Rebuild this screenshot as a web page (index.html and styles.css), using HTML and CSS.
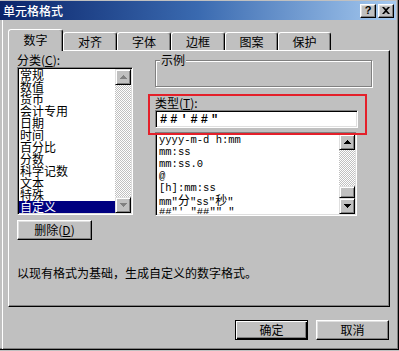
FILE: index.html
```html
<!DOCTYPE html>
<html lang="zh-CN">
<head>
<meta charset="utf-8">
<title>单元格格式</title>
<link rel="stylesheet" href="styles.css">
</head>
<body>
<div class="dialog">
  <div class="titlebar">
    <span class="title">单元格格式</span>
    <div class="cbtns">
      <span class="cbtn help">?</span>
      <span class="cbtn close"><svg width="8" height="7" viewBox="0 0 8 7"><path d="M0 0h2l2 2 2-2h2L5 3.5 8 7H6L4 5 2 7H0l3-3.5z" fill="#000"/></svg></span>
    </div>
  </div>
  <div class="content">
    <div class="tabs">
      <div class="tab active">数字</div>
      <div class="tab">对齐</div>
      <div class="tab">字体</div>
      <div class="tab">边框</div>
      <div class="tab w53">图案</div>
      <div class="tab w53">保护</div>
    </div>
    <div class="panel">
      <div class="left">
        <div class="label">分类(<u>C</u>):</div>
        <div class="listbox cat">
          <ul class="items">
            <li>常规</li>
            <li>数值</li>
            <li>货币</li>
            <li>会计专用</li>
            <li>日期</li>
            <li>时间</li>
            <li>百分比</li>
            <li>分数</li>
            <li>科学记数</li>
            <li>文本</li>
            <li>特殊</li>
            <li class="sel">自定义</li>
          </ul>
          <div class="vscroll">
            <span class="sbtn dis"><svg width="7" height="4" viewBox="0 0 7 4"><path d="M3 0h1v1h1v1h1v1h1v1H0V3h1V2h1V1h1z"/></svg></span>
            <span class="track"></span>
            <span class="sbtn dis"><svg width="7" height="4" viewBox="0 0 7 4"><path d="M0 0h7v1H6v1H5v1H4v1H3V3H2V2H1V1H0z"/></svg></span>
          </div>
        </div>
        <button class="btn del">删除(<u>D</u>)</button>
      </div>
      <div class="right">
        <div class="sample"><span class="sample-label">示例</span></div>
        <div class="type-box">
          <div class="label">类型(<u>T</u>):</div>
          <div class="input">##′##″</div>
        </div>
        <div class="listbox fmt">
          <ul class="items mono">
            <li>yyyy-m-d h:mm</li>
            <li>mm:ss</li>
            <li>mm:ss.0</li>
            <li>@</li>
            <li>[h]:mm:ss</li>
            <li>mm"<span class="cjk">分</span>"ss"<span class="cjk">秒</span>"</li>
            <li>##"′ "##"″ "</li>
          </ul>
          <div class="vscroll">
            <span class="sbtn"><svg width="7" height="4" viewBox="0 0 7 4"><path d="M3 0h1v1h1v1h1v1h1v1H0V3h1V2h1V1h1z"/></svg></span>
            <span class="track"></span>
            <span class="thumb"></span>
            <span class="sbtn"><svg width="7" height="4" viewBox="0 0 7 4"><path d="M0 0h7v1H6v1H5v1H4v1H3V3H2V2H1V1H0z"/></svg></span>
          </div>
        </div>
      </div>
      <p class="desc">以现有格式为基础，生成自定义的数字格式。</p>
    </div>
    <div class="actions">
      <button class="btn default">确定</button>
      <button class="btn">取消</button>
    </div>
  </div>
</div>
</body>
</html>
```
FILE: styles.css
```css
* { box-sizing: border-box; }
html, body { margin: 0; padding: 0; background: #c0c0c0; }
body {
  font-family: "Noto Sans CJK SC", "Liberation Sans", sans-serif;
  font-size: 12px;
  line-height: 12px;
  color: #000;
}
u { text-decoration: underline; }

.dialog {
  width: 399px;
  height: 350px;
  background: #c0c0c0;
  border-right: 1px solid #000;
  border-bottom: 1px solid #000;
  box-shadow: inset -1px -1px 0 #808080;
  display: flex;
  flex-direction: column;
}

.titlebar {
  height: 19px;
  margin: 1px 2px 0 0;
  padding: 0 2px 0 3px;
  background: linear-gradient(90deg, #0a246a 0%, #3a6ab0 50%, #a6caf0 100%);
  display: flex;
  align-items: center;
  justify-content: space-between;
}
.title { color: #fff; font-size: 12px; line-height: 12px; font-weight: 500; }
.cbtns { display: flex; gap: 2px; }
.cbtn {
  width: 16px;
  height: 14px;
  background: #c0c0c0;
  border: 1px solid;
  border-color: #fff #000 #000 #fff;
  box-shadow: inset -1px -1px 0 #808080, inset 1px 1px 0 #dfdfdf;
  display: flex;
  align-items: center;
  justify-content: center;
  font-family: "Liberation Sans", sans-serif;
  font-weight: bold;
  font-size: 11px;
  line-height: 11px;
}

.content {
  flex: 1;
  margin-left: 2px;
  border-left: 1px solid #fff;
  padding: 9px 0 0 5px;
  display: flex;
  flex-direction: column;
}

.tabs {
  display: flex;
  align-items: flex-end;
  height: 21px;
  position: relative;
  z-index: 1;
}
.tab {
  width: 54px;
  height: 18px;
  border-top: 1px solid #fff;
  border-left: 1px solid #fff;
  border-right: 1px solid #000;
  box-shadow: inset -1px 0 0 #808080;
  border-radius: 3px 3px 0 0;
  text-align: center;
  padding-top: 3px;
  background: #c0c0c0;
}
.tab.w53 { width: 53px; }
.tab.active {
  width: 55px;
  height: 22px;
  margin-bottom: -1px;
  padding-top: 4px;
}

.panel {
  width: 382px;
  height: 257px;
  border: 1px solid;
  border-color: #fff #000 #000 #fff;
  box-shadow: inset -1px -1px 0 #808080;
  padding: 2px 0 0 8px;
  display: grid;
  grid-template-columns: 116px 217px;
  column-gap: 22px;
  align-content: start;
  align-items: start;
}

.label { line-height: 13px; height: 13px; white-space: nowrap; }

.left { display: flex; flex-direction: column; }
.right { display: flex; flex-direction: column; }

.listbox {
  border: 1px solid;
  border-color: #808080 #fff #fff #808080;
  box-shadow: inset 1px 1px 0 #000, inset -1px -1px 0 #dfdfdf;
  padding: 1px;
  background: #fff;
  display: flex;
  overflow: hidden;
}
.listbox.cat { width: 116px; height: 148px; margin-top: 1px; }
.listbox.fmt { width: 202px; height: 84px; margin-top: 4px; }

.items {
  flex: 1;
  list-style: none;
  margin: 0;
  padding: 0;
  overflow: hidden;
  min-width: 0;
}
.items li {
  height: 12px;
  line-height: 12px;
  padding-left: 1px;
  white-space: nowrap;
}
.items li.sel { background: #000080; color: #fff; }
.items.mono li {
  font-family: "Liberation Mono", monospace;
  font-size: 10.5px;
  padding-left: 2px;
}
.items.mono .cjk { font-family: "Noto Sans CJK SC", sans-serif; font-size: 12px; }

.vscroll {
  width: 16px;
  flex: none;
  display: flex;
  flex-direction: column;
  background: repeating-conic-gradient(#fff 0 25%, #c0c0c0 0 50%) 0 0 / 2px 2px;
}
.sbtn, .thumb {
  width: 16px;
  height: 16px;
  flex: none;
  background: #c0c0c0;
  border: 1px solid;
  border-color: #dfdfdf #000 #000 #dfdfdf;
  box-shadow: inset 1px 1px 0 #fff, inset -1px -1px 0 #808080;
  display: flex;
  align-items: center;
  justify-content: center;
}
.thumb { height: 12px; }
.sbtn svg { fill: #000; }
.sbtn.dis svg { fill: #808080; }
.track { flex: 1; }

.btn {
  height: 20px;
  width: 73px;
  padding: 0;
  background: #c0c0c0;
  border: 1px solid;
  border-color: #fff #000 #000 #fff;
  box-shadow: inset -1px -1px 0 #808080, inset 1px 1px 0 #dfdfdf;
  font: inherit;
  color: #000;
  display: flex;
  align-items: center;
  justify-content: center;
}
.btn.del { width: 75px; margin-top: 5px; }
.btn.default {
  border-color: #000;
  box-shadow: inset 1px 1px 0 #fff, inset -1px -1px 0 #000, inset -2px -2px 0 #808080;
}

.sample {
  position: relative;
  margin-top: 7px;
  height: 27px;
  border: 1px solid #808080;
  box-shadow: inset 1px 1px 0 #fff, 1px 1px 0 #fff;
}
.sample-label {
  position: absolute;
  top: -7px;
  left: 4px;
  padding: 0 1px;
  background: #c0c0c0;
}

.type-box {
  position: relative;
  margin-top: 9px;
}
.type-box::after {
  content: "";
  position: absolute;
  top: -2px;
  left: -7px;
  width: 215px;
  height: 37px;
  border: 2px solid #e4202a;
  pointer-events: none;
}
.input {
  margin-top: 1px;
  width: 203px;
  height: 18px;
  background: #fff;
  border: 1px solid;
  border-color: #808080 #fff #fff #808080;
  box-shadow: inset 1px 1px 0 #000, inset -1px -1px 0 #dfdfdf;
  padding: 3px 0 0 4px;
  font-family: "Liberation Mono", monospace;
  font-weight: bold;
  font-size: 12px;
  line-height: 12px;
  letter-spacing: 3px;
}

.desc {
  grid-column: 1 / -1;
  margin: 26px 0 0;
  line-height: 13px;
}

.actions {
  display: flex;
  justify-content: flex-end;
  gap: 8px;
  margin-top: 13px;
  padding-right: 9px;
}
```
